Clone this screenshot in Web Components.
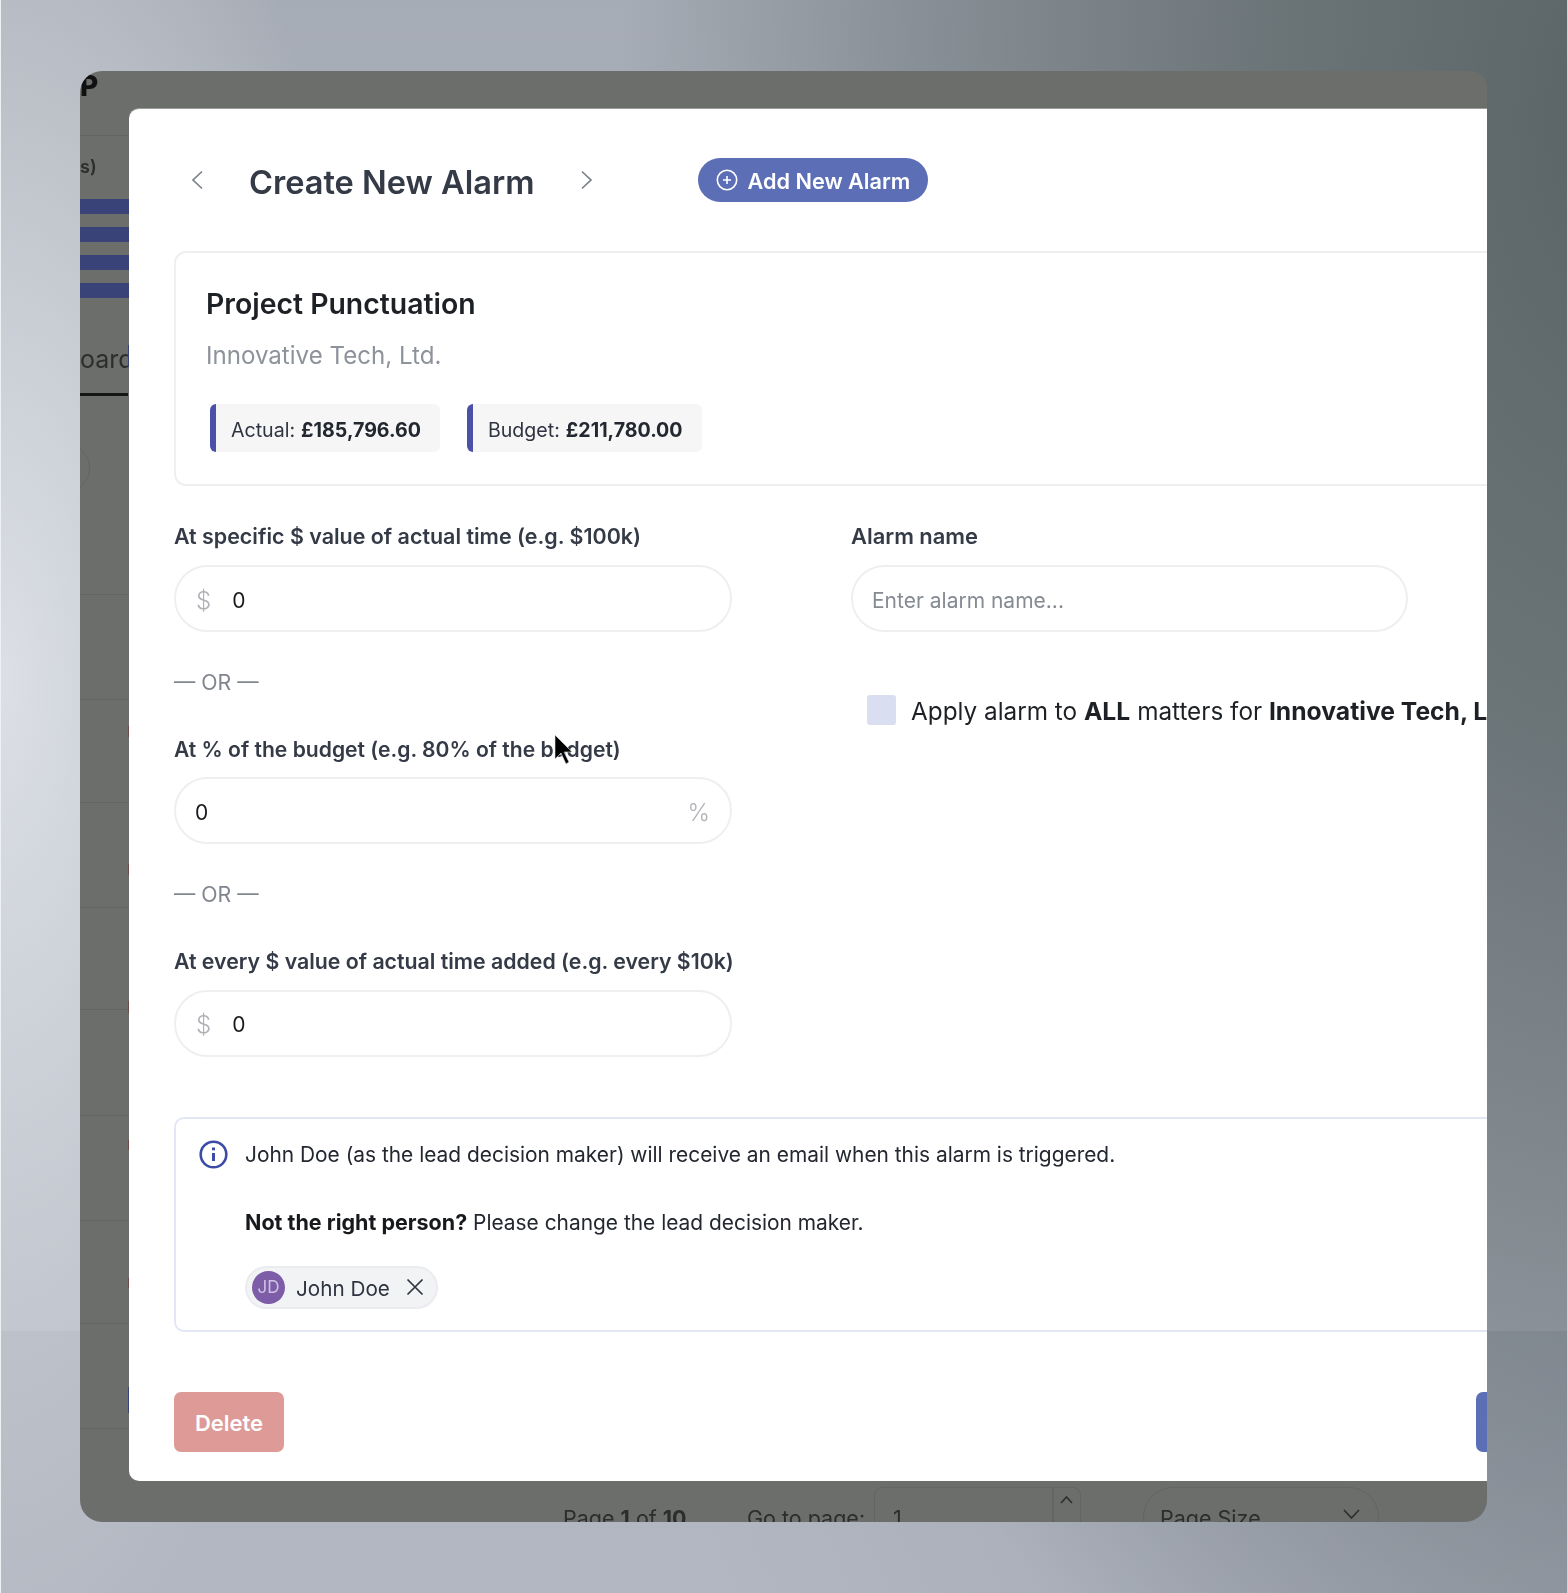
<!DOCTYPE html>
<html>
<head>
<meta charset="utf-8">
<title>Create New Alarm</title>
<style>
  html, body { margin: 0; height: 100%; }
  body { font-family: Inter, "Liberation Sans", sans-serif; }
</style>
</head>
<body>
<desk-top>
  <blurred-app>
    <alarm-modal>
      <alarm-header slot="head"></alarm-header>
      <project-card name="Project Punctuation" client="Innovative Tech, Ltd."></project-card>
      <div slot="left">
        <amount-field style="--lab:21.45px" label="At specific $ value of actual time (e.g. $100k)" prefix="$" value="0"></amount-field>
        <or-divider></or-divider>
        <amount-field style="--lab:21.1px;--lab-top:2px" label="At % of the budget (e.g. 80% of the budget)" suffix="%" value="0"></amount-field>
        <or-divider></or-divider>
        <amount-field label="At every $ value of actual time added (e.g. every $10k)" prefix="$" value="0"></amount-field>
      </div>
      <div slot="right">
        <amount-field style="--lab:21.9px" label="Alarm name" placeholder="Enter alarm name..."></amount-field>
        <apply-check></apply-check>
      </div>
      <alarm-notice slot="notice"></alarm-notice>
      <alarm-footer slot="foot"></alarm-footer>
    </alarm-modal>
  </blurred-app>
  <mouse-cursor></mouse-cursor>
</desk-top>

<script>
// small helper, every element is just a shadow root with a string in it
function shadow(el, html) {
  el.attachShadow({ mode: 'open' }).innerHTML = html
}

class DeskTop extends HTMLElement {
  constructor() {
    super()
    shadow(this, `
    <style>
      :host { display: block; position: relative; width: 1567px; height: 1593px; overflow: hidden; padding: 71px 0 0 79px; box-sizing: border-box; border-left: 1px solid #eef0f3;
        background:
          linear-gradient(to right, rgba(100,110,120,0) 45%, rgba(100,110,120,.22) 100%) 0 100% / 100% 262px no-repeat,
          linear-gradient(to bottom, transparent 1331px, rgba(120,125,135,.08) 1331px),
          radial-gradient(ellipse 380px 1000px at 0 680px, rgba(232,235,240,.8), rgba(232,235,240,0)),
          radial-gradient(ellipse 1000px 1800px at 1620px 120px, #5a6466 0, #6b7477 35%, rgba(125,133,140,.7) 72%, rgba(150,157,165,0) 100%),
          linear-gradient(to bottom, #a6acb5, #b7bcc6);
      }
    </style>
    <slot></slot>`)
  }
}

// the dimmed page behind the modal
class BlurredApp extends HTMLElement {
  constructor() {
    super()
    shadow(this, `
    <style>
      :host { display: block; position: relative; width: 1407px; height: 1451px; overflow: hidden; background: #6c6e6c; border-radius: 22px 16px 22px 22px; padding: 37px 0 0 49px; box-sizing: border-box; font-size: 21.5px; color: #2c2d2c; filter: blur(.35px); }
      .bg { position: absolute; }
      .logo { left: 0; top: 0; font-size: 28px; font-weight: 800; color: #111; line-height: 1; margin-top: 1px; }
      .bar { left: 0; width: 50px; height: 15px; background: #3a4378; }
      .rule { left: 0; width: 50px; height: 1px; background: #636563; }
      .line { left: 0; width: 48px; height: 3px; top: 322px; background: #141514; }
      .tick { left: 48px; width: 1px; background: #6e4a4a; }
      .page { top: 1434px; }
      .box { border: 1px solid #636563; top: 1416px; height: 60px; box-sizing: border-box; }
      svg { position: absolute; fill: none; stroke: #2c2d2c; stroke-width: 1.6; }
    </style>
    <div class="bg logo">P</div>
    <div class="bg" style="left:0;top:85px;font-size:18px;font-weight:600">s)</div>
    <div class="bg bar" style="top:128px"></div>
    <div class="bg bar" style="top:156px"></div>
    <div class="bg bar" style="top:184px"></div>
    <div class="bg bar" style="top:212px"></div>
    <div class="bg" style="left:0;top:273px;font-size:25px">oard</div>
    <div class="bg line"></div>
    <div class="bg rule" style="top:64px"></div>
    <div class="bg rule" style="top:523px"></div>
    <div class="bg rule" style="top:628px"></div>
    <div class="bg rule" style="top:731px"></div>
    <div class="bg rule" style="top:836px"></div>
    <div class="bg rule" style="top:938px"></div>
    <div class="bg rule" style="top:1044px"></div>
    <div class="bg rule" style="top:1149px"></div>
    <div class="bg rule" style="top:1252px"></div>
    <div class="bg rule" style="top:1357px"></div>
    <div class="bg tick" style="top:274px;height:22px;background:#3a4378"></div>
    <div class="bg tick" style="top:655px;height:11px"></div>
    <div class="bg tick" style="top:793px;height:11px"></div>
    <div class="bg tick" style="top:930px;height:12px"></div>
    <div class="bg tick" style="top:1069px;height:10px"></div>
    <div class="bg tick" style="top:1207px;height:10px"></div>
    <div class="bg tick" style="top:1316px;height:26px;background:#3a4378"></div>
    <div class="bg" style="left:-40px;top:372px;width:48px;height:48px;border:1px solid #636563;border-radius:50%"></div>
    <div class="bg page" style="left:483px">Page <b>1</b> of <b>10</b></div>
    <div class="bg page" style="left:667px">Go to page:</div>
    <div class="bg box" style="left:794px;width:207px;border-radius:8px"></div>
    <div class="bg box" style="left:972px;width:1px;padding:0"></div>
    <div class="bg page" style="left:813px">1</div>
    <svg style="left:980px;top:1425px" width="13" height="8" viewBox="0 0 13 8"><path d="M1 7l5.5-6L12 7"/></svg>
    <div class="bg box" style="left:1063px;width:236px;border-radius:30px"></div>
    <div class="bg page" style="left:1080px">Page Size</div>
    <svg style="left:1263px;top:1438px" width="17" height="10" viewBox="0 0 17 10"><path d="M1 1l7.500 8L16 1"/></svg>
    <slot></slot>`)
  }
}

class AlarmModal extends HTMLElement {
  constructor() {
    super()
    shadow(this, `
    <style>
      :host { display: block; position: relative; height: 1373px; background: #fff; overflow: hidden; border-radius: 10px 0 0 10px; border-top: 1px solid #9a9b9a; box-sizing: border-box; padding: 49px 0 0 45px; }
      .form { display: grid; grid-template-columns: 558px 557px; column-gap: 119px; margin-top: 33px; }
    </style>
    <slot name="head"></slot>
    <slot></slot>
    <div class="form"><slot name="left"></slot><slot name="right"></slot></div>
    <slot name="notice"></slot>
    <slot name="foot"></slot>`)
  }
}

class AlarmHeader extends HTMLElement {
  constructor() {
    super()
    shadow(this, `
    <style>
      :host { display: flex; align-items: center; height: 44px; }
      svg { display: block; fill: none; }
      .back { margin-left: 17px; margin-top: -1px; }
      h1 { margin: 4px 0 0 45px; font: 600 32.560px/44px Inter, sans-serif; color: #343a46; white-space: nowrap; }
      .next { margin-left: 46px; margin-top: -1px; }
      .add { margin-left: 105px; width: 230px; height: 44px; background: #5c6fb6; border-radius: 22px; color: #fff; font: 600 21.700px/44px Inter, sans-serif; display: flex; align-items: center; box-sizing: border-box; padding-left: 18px; gap: 9px; white-space: nowrap; }
      .add span { margin-top: 1px; }
    </style>
    <svg class="back" width="13" height="20" viewBox="0 0 13 20" stroke="#7b818b" stroke-width="1.7"><path d="M11 1.500L2 10l9 8.500"/></svg>
    <h1>Create New Alarm</h1>
    <svg class="next" width="13" height="20" viewBox="0 0 13 20" stroke="#7b818b" stroke-width="1.7"><path d="M2 1.500L11 10l-9 8.500"/></svg>
    <div class="add">
      <svg width="22" height="22" viewBox="0 0 22 22" stroke="#fff" stroke-width="1.6"><circle cx="11" cy="11" r="9.700"/><path d="M11 7v8M7 11h8"/></svg>
      <span>Add New Alarm</span>
    </div>`)
  }
}

class StatChip extends HTMLElement {
  constructor() {
    super()
    shadow(this, `
    <style>
      :host { display: flex; align-items: center; height: 48px; background: #f6f6f7; border-left: 6px solid #4c50a6; border-radius: 6px; box-sizing: border-box; padding: 3px 19px 0 15px; font: 400 19.600px Inter, sans-serif; color: #2e3440; white-space: nowrap; }
      b { font-weight: 700; margin-left: 6px; color: #23272f; }
    </style>
    <span>${this.getAttribute('label')}</span><b>${this.getAttribute('value')}</b>`)
  }
}

class ProjectCard extends HTMLElement {
  constructor() {
    super()
    shadow(this, `
    <style>
      :host { display: block; margin: 49px -40px 0 0; height: 235px; border: 2px solid #eeeff1; border-radius: 12px; box-sizing: border-box; padding: 30px 0 0 30px; }
      h2 { margin: 0; font: 600 28.400px/42px Inter, sans-serif; color: #1d2025; white-space: nowrap; }
      p { margin: 12px 0 0; font: 400 24.100px/38px Inter, sans-serif; color: #8d929b; white-space: nowrap; }
      .chips { display: flex; gap: 27px; margin: 29px 0 0 4px; }
    </style>
    <h2>${this.getAttribute('name')}</h2>
    <p>${this.getAttribute('client')}</p>
    <div class="chips">
      <stat-chip label="Actual:" value="£185,796.60"></stat-chip>
      <stat-chip label="Budget:" value="£211,780.00"></stat-chip>
    </div>`)
  }
}

class AmountField extends HTMLElement {
  constructor() {
    super()
    const pre = this.getAttribute('prefix')
    const suf = this.getAttribute('suffix')
    const val = this.getAttribute('value')
    const ph = this.getAttribute('placeholder')
    shadow(this, `
    <style>
      :host { display: block; }
      label { display: block; height: 34px; box-sizing: border-box; padding-top: var(--lab-top, 0); font: 600 var(--lab, 21.300px)/34px Inter, sans-serif; color: #343a46; white-space: nowrap; }
      .box { display: flex; align-items: center; height: 67px; margin-top: 12px; border: 2px solid #eeeff1; border-radius: 34px; box-sizing: border-box; padding: 3px 20px 0 19px; font: 400 21px Inter, sans-serif; color: #17191d; }
      .pre { color: #aeb1b7; font-size: 24px; margin-right: 21px; font-weight: 300; margin-left: 1px; }
      .suf { color: #aeb1b7; font-size: 24px; margin-left: auto; font-weight: 300; }
      .ph { color: #858a93; }
    </style>
    <label>${this.getAttribute('label')}</label>
    <div class="box">
      ${pre ? `<span class="pre">${pre}</span>` : ''}
      ${val ? `<span>${val}</span>` : ''}
      ${ph ? `<span class="ph">${ph}</span>` : ''}
      ${suf ? `<span class="suf">${suf}</span>` : ''}
    </div>`)
  }
}

class OrDivider extends HTMLElement {
  constructor() {
    super()
    shadow(this, `
    <style>
      :host { display: block; margin: 33px 0 32.400px; font: 400 21.300px/34px Inter, sans-serif; color: #80858e; }
    </style>
    — OR —`)
  }
}

class ApplyCheck extends HTMLElement {
  constructor() {
    super()
    shadow(this, `
    <style>
      :host { display: flex; align-items: center; gap: 15px; margin: 62px 0 0 16px; font: 400 24.300px/30px Inter, sans-serif; color: #1d2025; white-space: nowrap; }
      i { display: block; flex: none; width: 29px; height: 30px; background: #d9def1; border-radius: 3px; }
      span { margin-top: 2px; }
      b { font-size: 24.700px; font-weight: 700; }
    </style>
    <i></i><span>Apply alarm to <b>ALL</b> matters for <b>Innovative Tech, Ltd.</b></span>`)
  }
}

class PersonChip extends HTMLElement {
  constructor() {
    super()
    shadow(this, `
    <style>
      :host { display: inline-flex; align-items: center; height: 43px; background: #f2f3f5; border: 2px solid #ebecef; border-radius: 22px; box-sizing: border-box; padding: 0 12px 0 5px; font: 400 20.700px Inter, sans-serif; color: #2e3440; }
      .av { width: 33px; height: 33px; border-radius: 50%; background: #7d5ca8; color: #cfc3e2; font-size: 17px; display: flex; align-items: center; justify-content: center; margin-right: 11px; }
      .name { margin-top: 2px; }
      svg { margin-left: 16px; fill: none; stroke: #2e3440; stroke-width: 1.700; }
    </style>
    <span class="av">JD</span><span class="name">John Doe</span>
    <svg width="18" height="18" viewBox="0 0 18 18"><path d="M1.500 1.500l15 15M16.500 1.500l-15 15"/></svg>`)
  }
}

class AlarmNotice extends HTMLElement {
  constructor() {
    super()
    shadow(this, `
    <style>
      :host { display: block; margin: 60px -40px 0 0; height: 215px; border: 2px solid #e3e6f5; border-radius: 10px; box-sizing: border-box; padding: 19px 0 0 23px; font: 400 20.900px/34px Inter, sans-serif; color: #23272f; }
      .row { display: flex; gap: 17px; align-items: center; }
      svg { flex: none; fill: none; stroke: #3b4ba6; stroke-width: 2.600; }
      p { margin: 33px 0 0 46px; }
      b { font-size: 21.500px; font-weight: 700; color: #17191d; }
      .who { margin: 26px 0 0 46px; }
    </style>
    <div class="row">
      <svg width="29" height="29" viewBox="0 0 29 29"><circle cx="14.500" cy="14.500" r="12.800"/><path d="M14.500 13v8" stroke-width="3"/><path d="M14.500 7.500v2.800" stroke-width="3"/></svg>
      <span>John Doe (as the lead decision maker) will receive an email when this alarm is triggered.</span>
    </div>
    <p><b>Not the right person?</b> Please change the lead decision maker.</p>
    <div class="who"><person-chip></person-chip></div>`)
  }
}

class AlarmFooter extends HTMLElement {
  constructor() {
    super()
    shadow(this, `
    <style>
      :host { display: block; position: relative; height: 60px; margin-top: 60px; }
      .del { width: 110px; height: 60px; background: #dd9a96; border-radius: 7px; color: #fff; font: 600 22px/62px Inter, sans-serif; text-align: center; }
      .save { position: absolute; left: 1302px; top: 0; width: 60px; height: 60px; background: #5c6fb6; border-radius: 7px; }
    </style>
    <div class="del">Delete</div><div class="save"></div>`)
  }
}

class MouseCursor extends HTMLElement {
  constructor() {
    super()
    shadow(this, `
    <style>
      :host { position: absolute; left: 551px; top: 733px; display: block; width: 22px; height: 34px; }
    </style>
    <svg width="22" height="34" viewBox="0 0 22 34"><path d="M3 2v24l6-6 5 11 3-2-5-10h8z" fill="#000" stroke="#dfe0e2" stroke-width="1" stroke-opacity=".6"/></svg>`)
  }
}

customElements.define('desk-top', DeskTop)
customElements.define('blurred-app', BlurredApp)
customElements.define('alarm-modal', AlarmModal)
customElements.define('alarm-header', AlarmHeader)
customElements.define('stat-chip', StatChip)
customElements.define('project-card', ProjectCard)
customElements.define('amount-field', AmountField)
customElements.define('or-divider', OrDivider)
customElements.define('apply-check', ApplyCheck)
customElements.define('person-chip', PersonChip)
customElements.define('alarm-notice', AlarmNotice)
customElements.define('alarm-footer', AlarmFooter)
customElements.define('mouse-cursor', MouseCursor)
</script>
</body>
</html>
